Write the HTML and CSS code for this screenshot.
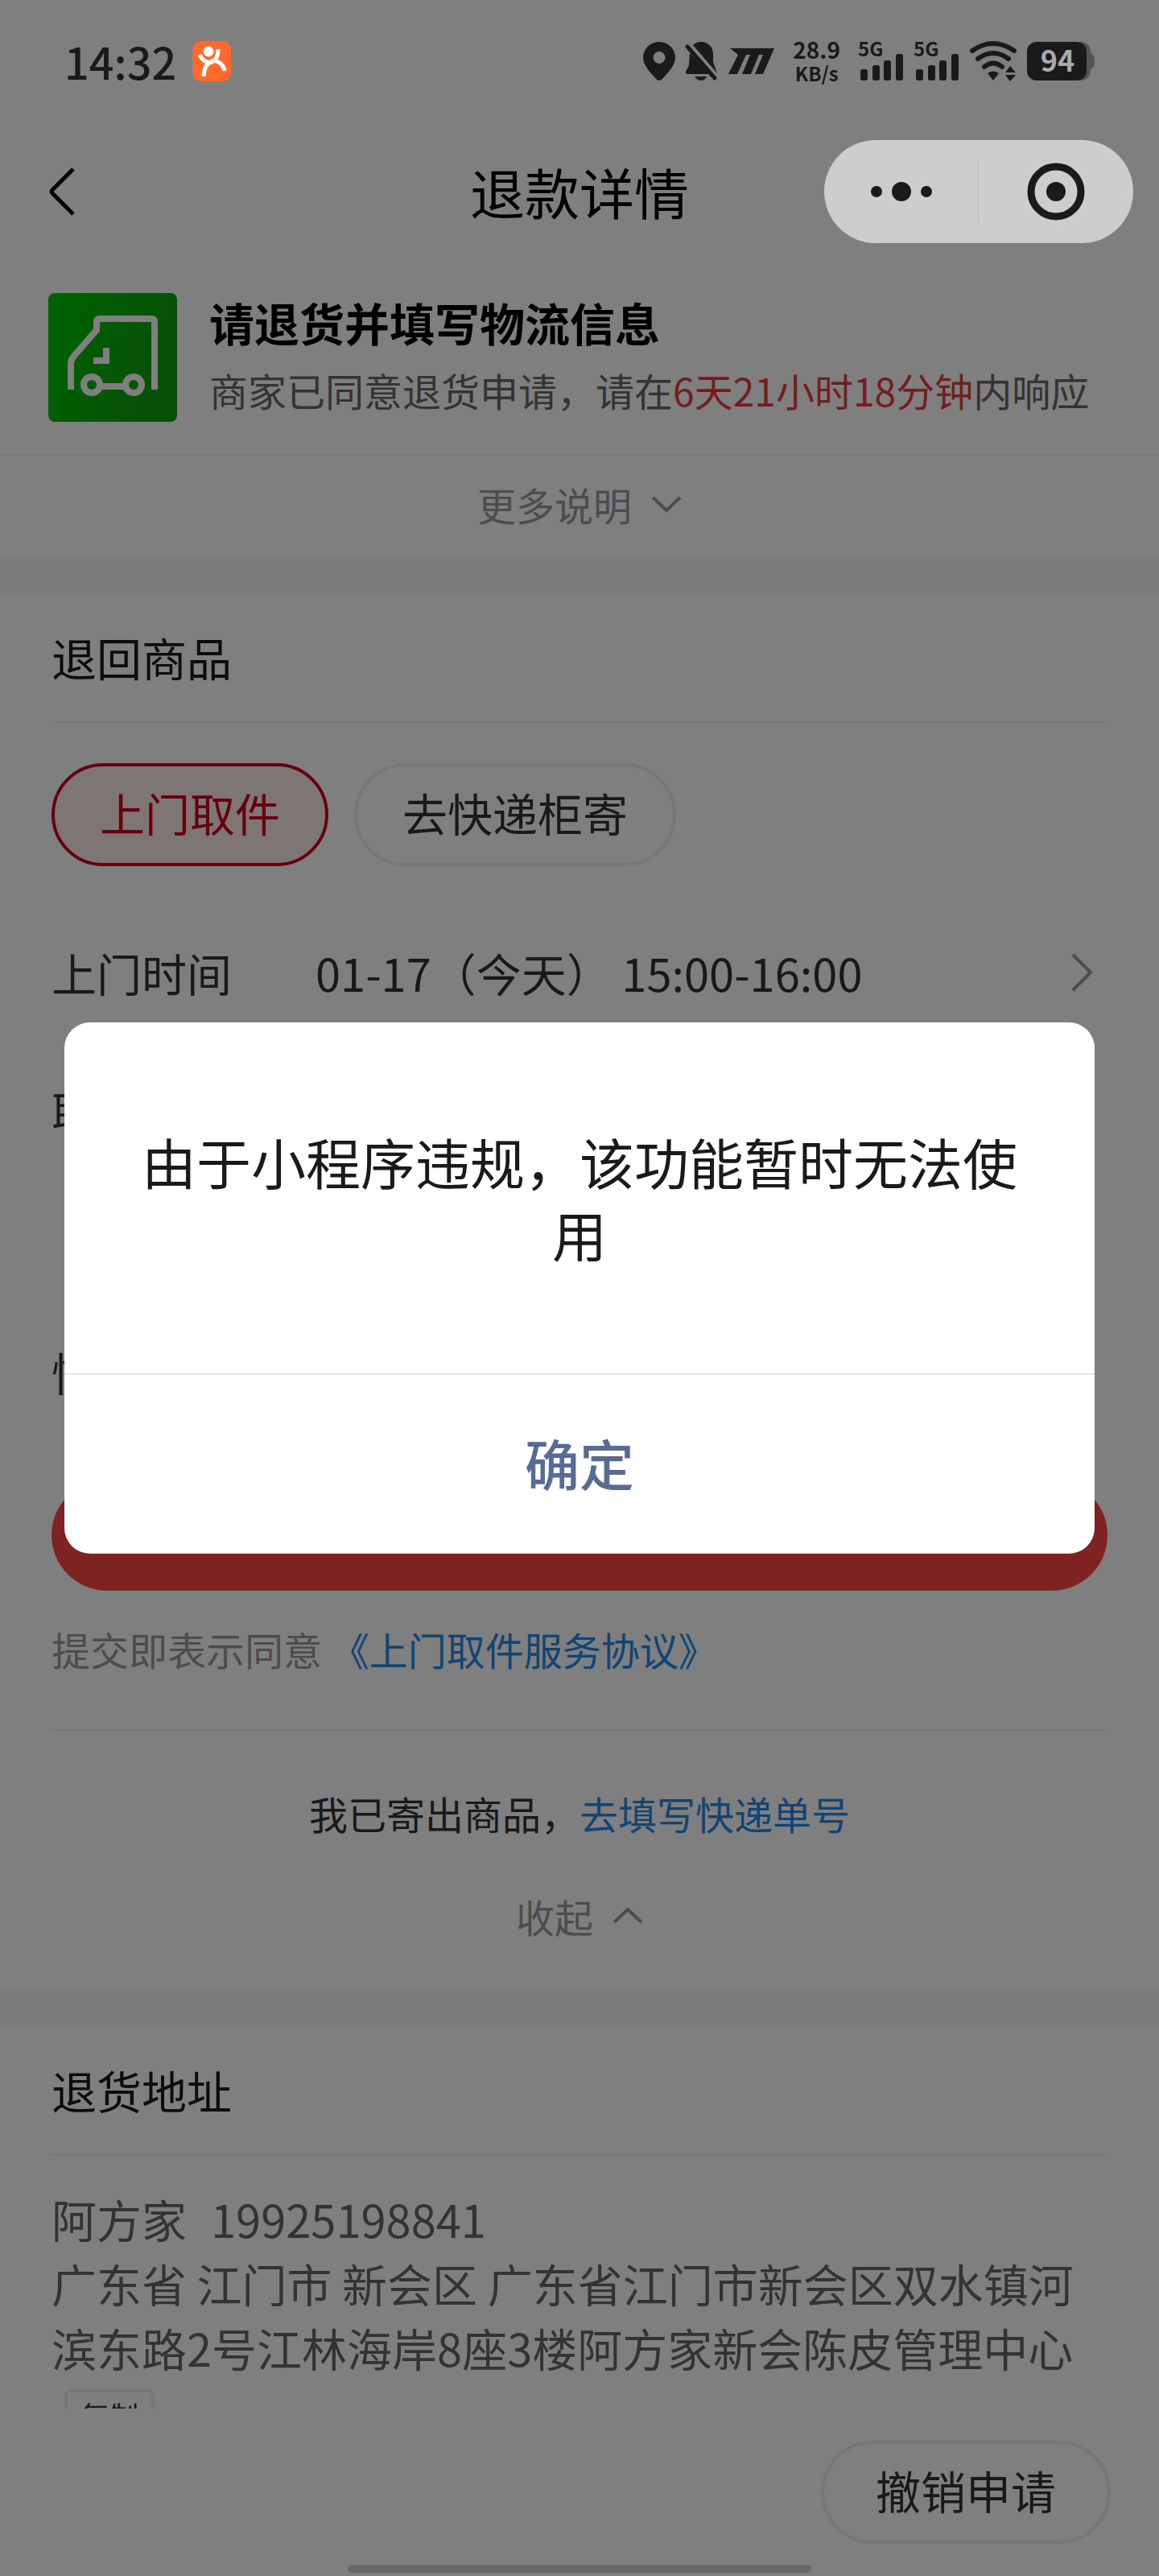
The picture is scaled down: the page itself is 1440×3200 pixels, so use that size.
FILE: index.html
```html
<!DOCTYPE html>
<html lang="zh-CN">

<head>
    <meta charset="utf-8" />
    <meta name="viewport" content="width=device-width, initial-scale=1.0">
    <title>退款详情</title>
    <link rel="stylesheet" href="styles.css">
</head>

<body>
    <div class="screen">
        <header class="statusbar">
            <span class="clock">14:32</span>
            <svg class="app-icon" width="48" height="50" viewBox="0 0 48 50">
                <rect width="48" height="50" rx="11" fill="#ff6a2c" />
                <circle cx="20" cy="13" r="6.5" fill="#fff" />
                <path d="M9 17q4 9 13 10q10-3 10-17M14 44q0-15 12-20q12 2 14 13" fill="none" stroke="#fff" stroke-width="5" />
            </svg>
            <div class="status-icons">
                <svg width="40" height="48" viewBox="0 0 40 48">
                    <path fill-rule="evenodd" d="M20 0a20 20 0 0 1 20 20c0 10-11 20-17 27q-3 2-6 0C11 40 0 30 0 20A20 20 0 0 1 20 0zm0 12a7.500 7.500 0 1 0 0 15a7.500 7.500 0 0 0 0-15z" />
                </svg>
                <svg width="42" height="48" viewBox="0 0 42 48">
                    <path d="M10 4q4-4 10-4c9 0 15 7 15 15v10l5 14zM6 14l25 26H3q-3 0-2-3l4-8zM12 43h15q-2 5-7 5t-8-5z" />
                    <path d="M3 6l34 39" stroke="#1a1a1a" stroke-width="5" stroke-linecap="round" />
                </svg>
                <svg width="58" height="48" viewBox="0 0 58 48">
                    <path d="M2 8h55L43 40H33l10-24h-5L28 40H17l10-24h-5L11 40H0l12-24z" />
                </svg>
                <div class="speed">
                    <span class="speed-num">28.9</span>
                    <span class="speed-unit">KB/s</span>
                </div>
                <svg class="signal" width="57" height="50" viewBox="0 0 57 50">
                    <text x="0" y="19">5G</text>
                    <rect x="3" y="35" width="9" height="14" rx="3" />
                    <rect x="18" y="30" width="9" height="19" rx="3" />
                    <rect x="32" y="24" width="9" height="25" rx="3" />
                    <rect x="47" y="16" width="9" height="33" rx="3" />
                </svg>
                <svg class="signal" width="57" height="50" viewBox="0 0 57 50">
                    <text x="0" y="19">5G</text>
                    <rect x="3" y="35" width="9" height="14" rx="3" />
                    <rect x="18" y="30" width="9" height="19" rx="3" />
                    <rect x="32" y="24" width="9" height="25" rx="3" />
                    <rect x="47" y="16" width="9" height="33" rx="3" />
                </svg>
                <svg width="60" height="50" viewBox="0 0 60 50">
                    <g fill="none" stroke="#1a1a1a" stroke-width="6" stroke-linecap="round">
                        <path d="M4 12q26-18 52 0" />
                        <path d="M11 22q19-14 38 0" />
                        <path d="M19 32q11-9 22 0" />
                    </g>
                    <path d="M23 40q7-5 14 0l-7 9zM51 31l7 8H45zM45 42h13l-7 8z" />
                </svg>
                <svg class="battery" width="84" height="48" viewBox="0 0 84 48">
                    <path d="M66 0q13 0 13 14q5 1 5 10t-5 10q0 14-13 14z" fill="#555" />
                    <rect width="74" height="48" rx="12" />
                    <text x="38" y="37" text-anchor="middle">94</text>
                </svg>
            </div>
        </header>

        <nav class="navbar">
            <button class="back" aria-label="返回">
                <svg width="34" height="62" viewBox="0 0 34 62">
                    <path d="M31 3L5 29q-2 2 0 4l26 26" fill="none" stroke="#000" stroke-width="5" />
                </svg>
            </button>
            <h1 class="nav-title">退款详情</h1>
            <div class="capsule">
                <button class="capsule-btn" aria-label="更多">
                    <svg width="76" height="24" viewBox="0 0 76 24">
                        <circle cx="7" cy="12" r="7" />
                        <circle cx="38" cy="12" r="12" />
                        <circle cx="69" cy="12" r="7" />
                    </svg>
                </button>
                <button class="capsule-btn" aria-label="关闭">
                    <svg width="72" height="72" viewBox="0 0 72 72">
                        <circle cx="36" cy="36" r="31" fill="none" stroke="#1a1a1a" stroke-width="9" />
                        <circle cx="36" cy="36" r="12" />
                    </svg>
                </button>
            </div>
        </nav>

        <main class="content">
            <section class="state">
                <svg class="state-icon" width="160" height="160" viewBox="0 0 160 160">
                    <defs>
                        <linearGradient id="tile" x1="0" x2="1" y1="0" y2="0.3">
                            <stop offset="0" stop-color="#00c800" />
                            <stop offset="1" stop-color="#10a010" />
                        </linearGradient>
                    </defs>
                    <rect width="160" height="160" rx="8" fill="url(#tile)" />
                    <g fill="none" stroke="#fff" stroke-width="8">
                        <path d="M28 120V88q0-5 4-10l28-32V36q0-4 4-4h64q4 0 4 4v84" />
                        <path d="M56 84h16V68" />
                        <circle cx="54" cy="114" r="10" />
                        <circle cx="106" cy="114" r="10" />
                        <path d="M64 116h32" />
                    </g>
                </svg>
                <div>
                    <h2 class="state-title">请退货并填写物流信息</h2>
                    <p class="state-desc">商家已同意退货申请，请在<span class="countdown">6天21小时18分钟</span>内响应</p>
                </div>
            </section>
            <button class="fold fold-more">
                更多说明
                <svg width="38" height="20" viewBox="0 0 38 20">
                    <path d="M2 2l17 16L36 2" />
                </svg>
            </button>

            <section class="card">
                <h3 class="card-title">退回商品</h3>
                <div class="pills">
                    <button class="pill pill-active">上门取件</button>
                    <button class="pill">去快递柜寄</button>
                </div>
                <div class="row">
                    <span class="row-label">上门时间</span>
                    <span>01-17（今天） 15:00-16:00</span>
                    <svg class="arrow" width="28" height="48" viewBox="0 0 28 48">
                        <path d="M3 2l22 22L3 46" fill="none" stroke="#999" stroke-width="4" />
                    </svg>
                </div>
                <div class="row row-address">
                    <span class="row-label">取件地址</span>
                </div>
                <div class="row">
                    <span class="row-label">快递公司</span>
                </div>
                <button class="submit">预约上门取件</button>
                <p class="agree">提交即表示同意 <a class="link" href="#">《上门取件服务协议》</a></p>
                <p class="shipped">我已寄出商品，<a class="link" href="#">去填写快递单号</a></p>
                <button class="fold fold-less">
                    收起
                    <svg width="38" height="20" viewBox="0 0 38 20">
                        <path d="M2 18L19 2l17 16" />
                    </svg>
                </button>
            </section>

            <section class="card">
                <h3 class="card-title">退货地址</h3>
                <div class="address">
                    <p>阿方家<span class="phone">19925198841</span></p>
                    <p>广东省 江门市 新会区 广东省江门市新会区双水镇河滨东路2号江林海岸8座3楼阿方家新会陈皮管理中心
                        <button class="copy">复制</button></p>
                </div>
            </section>
        </main>

        <footer class="footer">
            <button class="pill pill-wide">撤销申请</button>
            <div class="home-bar"></div>
        </footer>

        <div class="mask">
            <div class="modal" role="dialog" aria-modal="true" aria-labelledby="msg">
                <p class="modal-text" id="msg">由于小程序违规，该功能暂时无法使用</p>
                <button class="modal-btn">确定</button>
            </div>
        </div>
    </div>
</body>

</html>
```
FILE: styles.css
```css
* {
    box-sizing: border-box;
}

body {
    margin: 0;
    font-family: "Noto Sans CJK SC", sans-serif;
    font-size: 56px;
    line-height: 80px;
    color: #333;
}

h1,
h2,
h3,
p {
    margin: 0;
}

button {
    padding: 0;
    border: none;
    background: none;
    font: inherit;
    color: inherit;
    cursor: pointer;
}

a {
    text-decoration: none;
}

svg {
    display: block;
    flex-shrink: 0;
    overflow: visible;
}

.screen {
    position: relative;
    display: flex;
    flex-direction: column;
    height: 100vh;
    background: #fff;
    overflow: hidden;
}

/* status bar and capsule stay above the mask */
.statusbar {
    position: relative;
    z-index: 2;
    display: flex;
    align-items: center;
    gap: 20px;
    height: 152px;
    padding: 0 80px;
    color: #1a1a1a;
    fill: #1a1a1a;
}

.clock {
    font-size: 54px;
    font-weight: 500;
}

.status-icons {
    display: flex;
    align-items: center;
    gap: 12px;
    margin-left: auto;
}

.speed {
    display: flex;
    flex-direction: column;
    align-items: center;
    margin: 0 10px;
    font-weight: 700;
}

.speed-num {
    font-size: 28px;
    line-height: 30px;
}

.speed-unit {
    font-size: 24px;
    line-height: 30px;
}

.signal {
    font-size: 24px;
    font-weight: 700;
}

.battery text {
    font-size: 36px;
    font-weight: 700;
    fill: #aaa;
}

.navbar {
    position: relative;
    display: flex;
    align-items: center;
    justify-content: space-between;
    height: 172px;
    padding: 0 32px 0 60px;
}

.back {
    width: 356px;
}

.nav-title {
    font-size: 68px;
    font-weight: 400;
    color: #000;
}

.capsule {
    position: relative;
    z-index: 2;
    display: flex;
    align-items: center;
    width: 384px;
    height: 128px;
    border-radius: 64px;
    background: #cdcdcd;
    fill: #1a1a1a;
}

.capsule-btn {
    display: flex;
    flex: 1;
    align-items: center;
    justify-content: center;
    height: 76px;
}

.capsule-btn + .capsule-btn {
    border-left: 1px solid #bbb;
}

.content {
    flex: 1;
    min-height: 0;
    overflow: hidden;
}

.state {
    display: flex;
    gap: 40px;
    padding: 40px 60px;
    border-bottom: 2px solid #eee;
}

.state-title {
    margin-bottom: 8px;
    font-size: 56px;
    font-weight: 700;
    line-height: 72px;
    color: #000;
}

.state-desc {
    font-size: 48px;
    color: #666;
}

.countdown {
    color: #e93b3d;
}

.fold {
    display: flex;
    align-items: center;
    justify-content: center;
    gap: 24px;
    width: 100%;
    font-size: 48px;
    color: #999;
}

.fold path {
    fill: none;
    stroke: #999;
    stroke-width: 4;
}

.fold-more {
    height: 126px;
    padding-bottom: 6px;
}

.fold-less {
    padding: 48px 0 52px;
}

.card {
    padding: 0 64px;
    border-top: 48px solid #f7f7f7;
}

.card-title {
    padding: 36px 0 40px;
    border-bottom: 2px solid #eee;
    font-size: 56px;
    font-weight: 400;
    color: #1a1a1a;
}

.pills {
    display: flex;
    gap: 32px;
    padding: 50px 0 46px;
}

.pill {
    height: 128px;
    padding: 0 56px 6px;
    border: 4px solid #eee;
    border-radius: 64px;
}

.pill-active {
    border-color: #d0021b;
    background: #fdeaea;
    color: #d0021b;
}

.pill-wide {
    padding: 0 64px 6px;
}

.row {
    display: flex;
    padding: 46px 0;
}

.row-address {
    min-height: 324px;
}

.row-label {
    width: 328px;
}

.arrow {
    align-self: center;
    margin-left: auto;
    margin-right: 18px;
}

.submit {
    width: 100%;
    height: 138px;
    margin-top: 48px;
    padding-bottom: 8px;
    border-radius: 69px;
    background: #ff4444;
    font-size: 48px;
    color: #fff;
}

.agree {
    padding: 32px 0 60px;
    border-bottom: 2px solid #eee;
    font-size: 48px;
    color: #999;
}

.shipped {
    padding-top: 62px;
    font-size: 48px;
    text-align: center;
}

.link {
    color: #2088e8;
}

.address {
    padding: 38px 0;
    color: #666;
}

.phone {
    margin-left: 30px;
}

.copy {
    height: 64px;
    margin: 12px 0 0 16px;
    padding: 0 16px;
    border: 4px solid #eee;
    border-radius: 8px;
    font-size: 36px;
    line-height: 52px;
    vertical-align: top;
    color: #333;
}

.footer {
    position: relative;
    display: flex;
    justify-content: flex-end;
    height: 208px;
    padding: 40px 60px;
}

.home-bar {
    position: absolute;
    bottom: 4px;
    left: 30%;
    width: 40%;
    height: 10px;
    border-radius: 5px;
    background: #d0d0d0;
}

.mask {
    position: absolute;
    inset: 0;
    z-index: 1;
    display: flex;
    align-items: center;
    justify-content: center;
    padding: 0 80px;
    background: rgba(0, 0, 0, 0.5);
}

.modal {
    width: 100%;
    border-radius: 32px;
    background: #fff;
    overflow: hidden;
}

.modal-text {
    padding: 128px 88px;
    font-size: 68px;
    line-height: 90px;
    text-align: center;
    color: #1a1a1a;
}

.modal-btn {
    width: 100%;
    height: 224px;
    padding-bottom: 4px;
    border-top: 2px solid #e5e5e5;
    font-size: 68px;
    font-weight: 500;
    color: #576b95;
}
```
